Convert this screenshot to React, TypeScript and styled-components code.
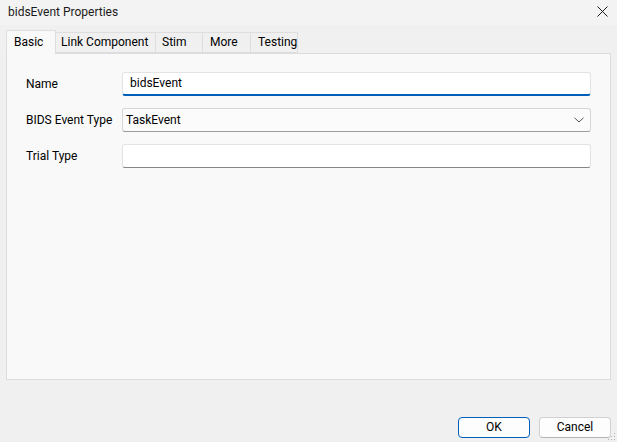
import React from "react";
import styled, { createGlobalStyle } from "styled-components";

const Global = createGlobalStyle`
  html, body { margin: 0; padding: 0; }
  * { box-sizing: border-box; }
`;

const Window = styled.div`
  width: 617px;
  height: 442px;
  background: #f0f0f0;
  display: flex;
  flex-direction: column;
  position: relative;
  overflow: hidden;
  font-family: Roboto, "Noto Sans", sans-serif;
  font-size: 12px;
  color: #000;
`;

const TitleBar = styled.div`
  height: 25px;
  background: #f3f3f3;
  display: flex;
  align-items: center;
  justify-content: space-between;
  padding: 0 8px 2px 8px;
`;

const Title = styled.span`
  color: #1a1a1a;
`;

const CloseIcon = styled.svg`
  width: 11px;
  height: 11px;
  margin-right: 1px;
`;

const Body = styled.div`
  flex: 1;
  display: flex;
  flex-direction: column;
  padding: 5px 6px 0 6px;
`;

const TabBar = styled.div`
  display: flex;
  align-items: flex-end;
  height: 23px;
  position: relative;
  z-index: 1;
`;

const Tab = styled.div<{ $w: number; $active?: boolean; $pad?: number }>`
  width: ${(p) => p.$w}px;
  height: ${(p) => (p.$active ? 24 : 21)}px;
  margin-bottom: ${(p) => (p.$active ? -1 : 0)}px;
  padding-left: ${(p) => p.$pad ?? 7}px;
  display: flex;
  align-items: center;
  background: ${(p) => (p.$active ? "#f9f9f9" : "#f0f0f0")};
  border: 1px solid #dedede;
  border-bottom: ${(p) => (p.$active ? "none" : "1px solid #dedede")};
  margin-left: ${(p) => (p.$active ? 0 : -1)}px;
  padding-bottom: ${(p) => (p.$active ? 2 : 1)}px;
  white-space: nowrap;
`;

const Panel = styled.div`
  height: 327px;
  background: #f9f9f9;
  border: 1px solid #dcdcdc;
  padding: 18px 19px 0 19px;
  display: grid;
  grid-template-columns: 96px 1fr;
  grid-auto-rows: min-content;
  row-gap: 12px;
  align-items: center;
`;

const Label = styled.label`
  color: #000;
`;

const Field = styled.div<{ $focused?: boolean; $combo?: boolean }>`
  height: 24px;
  border: 1px solid #e3e3e3;
  border-bottom: ${(p) => (p.$focused ? "2px solid #005fb8" : "1px solid #868686")};
  border-radius: 3px;
  background: ${(p) => (p.$combo ? "#fbfbfb" : "#ffffff")};
  display: flex;
  align-items: center;
  justify-content: space-between;
  padding: 0 ${(p) => (p.$combo ? 6 : 7)}px ${(p) => (p.$focused ? 1 : 0)}px ${(p) => (p.$combo ? 3 : 7)}px;
  ${(p) => (p.$combo ? "border-color: #d6d6d6; border-bottom-color: #9a9a9a;" : "")}
`;

const Chevron = styled.svg`
  width: 10px;
  height: 6px;
`;

const Footer = styled.div`
  height: 61px;
  display: flex;
  justify-content: flex-end;
  align-items: flex-start;
  gap: 9px;
  padding: 36px 6px 0 0;
`;

const Button = styled.button<{ $default?: boolean }>`
  width: 72px;
  height: 21px;
  border-radius: 4px;
  background: #fdfdfd;
  border: 1px solid ${(p) => (p.$default ? "#005fb8" : "#d0d0d0")};
  ${(p) => (p.$default ? "" : "border-bottom-color: #b5b5b5;")}
  font-family: inherit;
  font-size: inherit;
  color: #000;
  padding: 0 0 1px 0;
`;

const Grip = styled.svg`
  position: absolute;
  right: 1px;
  bottom: 1px;
  width: 8px;
  height: 8px;
`;

export default function App() {
  const tabs = [
    { label: "Basic", w: 50, active: true, pad: 7 },
    { label: "Link Component", w: 101, pad: 5 },
    { label: "Stim", w: 48, pad: 6 },
    { label: "More", w: 49, pad: 7 },
    { label: "Testing", w: 48, pad: 7 },
  ];
  return (
    <>
      <Global />
      <Window>
        <TitleBar>
          <Title>bidsEvent Properties</Title>
          <CloseIcon viewBox="0 0 11 11">
            <path d="M0.5 0.5 L10.5 10.5 M10.5 0.5 L0.5 10.5" stroke="#1a1a1a" strokeWidth="1" fill="none" />
          </CloseIcon>
        </TitleBar>
        <Body>
          <TabBar>
            {tabs.map((t) => (
              <Tab key={t.label} $w={t.w} $active={t.active} $pad={t.pad}>
                {t.label}
              </Tab>
            ))}
          </TabBar>
          <Panel>
            <Label>Name</Label>
            <Field $focused>bidsEvent</Field>
            <Label>BIDS Event Type</Label>
            <Field $combo>
              <span>TaskEvent</span>
              <Chevron viewBox="0 0 10 6">
                <path d="M0.5 0.8 L5 5 L9.5 0.8" stroke="#555" strokeWidth="1" fill="none" />
              </Chevron>
            </Field>
            <Label>Trial Type</Label>
            <Field />
          </Panel>
        </Body>
        <Footer>
          <Button $default>OK</Button>
          <Button>Cancel</Button>
        </Footer>
        <Grip viewBox="0 0 8 8">
          <rect x="6" y="0" width="1" height="1" fill="#b0b0b0" />
          <rect x="3" y="3" width="1" height="1" fill="#b0b0b0" />
          <rect x="6" y="3" width="1" height="1" fill="#b0b0b0" />
          <rect x="0" y="6" width="1" height="1" fill="#b0b0b0" />
          <rect x="3" y="6" width="1" height="1" fill="#b0b0b0" />
          <rect x="6" y="6" width="1" height="1" fill="#b0b0b0" />
        </Grip>
      </Window>
    </>
  );
}
